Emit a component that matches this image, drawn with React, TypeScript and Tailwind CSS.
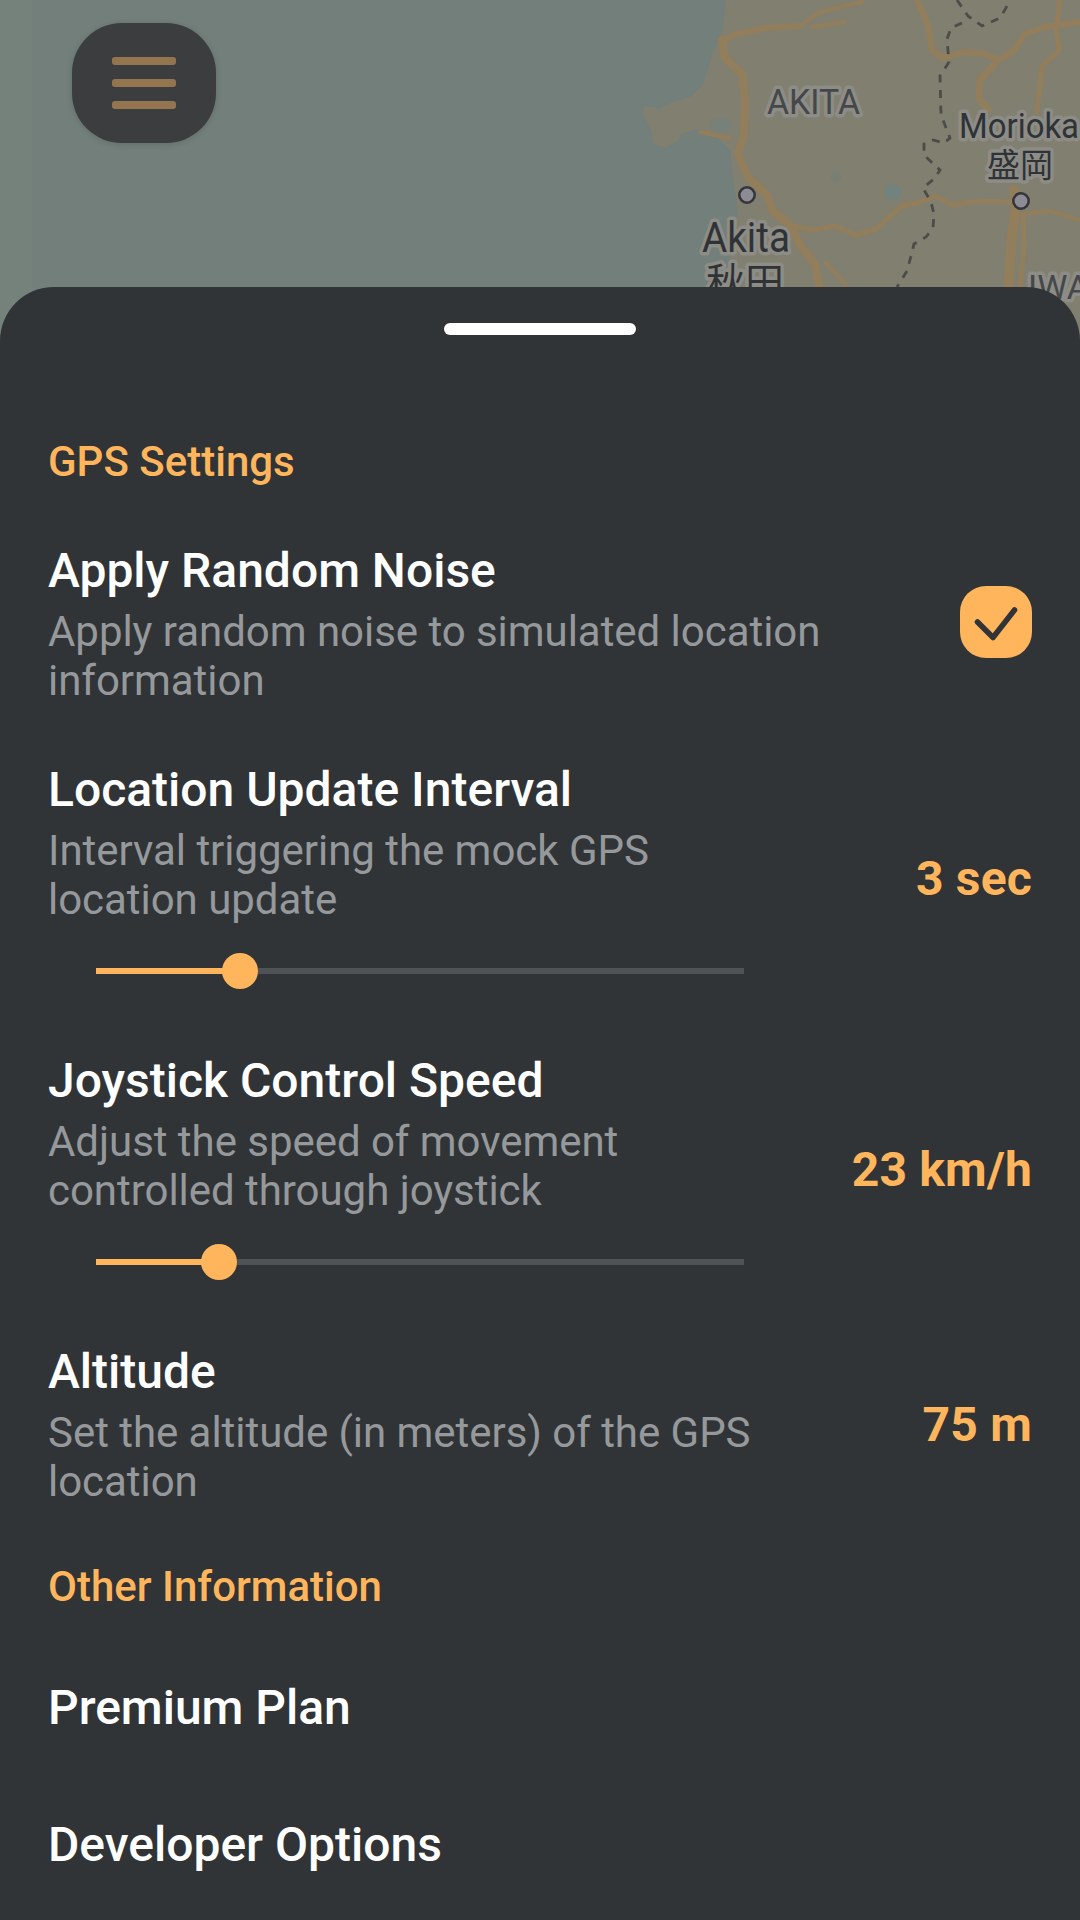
import React from 'react';

interface SettingProps {
    title: string;
    lines: string[];
    className: string;
    aside?: React.ReactNode;
    children?: React.ReactNode;
}

const MapLabel: React.FC<{ x: number; y: number; size: number; color: string; length?: number; children: string }> = ({ x, y, size, color, length, children }) => (
    <text
        x={x}
        y={y}
        fontSize={size}
        fill={color}
        stroke="#8d8c86"
        strokeWidth={7}
        strokeLinejoin="round"
        paintOrder="stroke"
        textLength={length}
        lengthAdjust="spacingAndGlyphs"
    >
        {children}
    </text>
);

const MapBackdrop: React.FC = () => (
    <svg className="absolute inset-0 h-[360px] w-[1080px]" viewBox="0 0 1080 360">
        <rect width="1080" height="360" fill="#727f7a" />
        <rect width="32" height="360" fill="#75827c" />
        {/* Land */}
        <path
            d="M726 0 L722 30 L712 55 L703 84 L692 96 L670 103 L660 108 L644 106 L643 115 L650 127 L654 144 L665 148 L677 142 L681 134 L698 129 L715 136 L730 150 L732 172 L738 210 L732 250 L724 287 L720 360 H1080 V0 Z"
            fill="#817f6f"
        />
        <g fill="#77817a">
            <ellipse cx="721" cy="125" rx="11" ry="7" />
            <circle cx="893" cy="192" r="8" fill="#70837f" />
            <circle cx="836" cy="177" r="5" fill="#7b7e73" />
        </g>
        {/* Roads */}
        <g fill="none" stroke="#937e5c" strokeLinecap="round" strokeLinejoin="round">
            <path strokeWidth="8" d="M722 40 L725 58 L742 74 L745 100 L744 135 L738 154 L748 177 L767 195 L773 211 L790 225 L800 245 L815 264 L820 290" />
            <path strokeWidth="6" d="M800 26 L765 28 L733 35 L722 42" />
            <path strokeWidth="4" d="M800 26 L818 13 L840 7 L862 2 M812 27 L845 22" />
            <path strokeWidth="6" d="M917 0 L928 25 L932 50 L942 58 L964 52 L984 54 L1000 60 L1014 50 L1025 34 L1045 27 L1080 22" />
            <path strokeWidth="7" d="M994 65 L980 80 L979 98 L988 110" />
            <path strokeWidth="5" d="M1060 0 L1056 32 L1060 50 L1042 66 L1037 112" />
            <path strokeWidth="5" d="M790 225 L812 230 L835 226 L856 235 L876 229 L888 218 L902 206 L917 203 L936 196 L952 205 L980 201 L1010 202" />
            <path strokeWidth="10" d="M1014 190 L1016 205 L1012 235 L1008 290" />
            <path strokeWidth="5" d="M1023 215 L1024 245 L1020 290" />
            <path strokeWidth="4" d="M1022 214 L1050 211 L1080 220 M826 263 L846 285 M700 132 L728 138" />
        </g>
        {/* Prefecture border */}
        <path
            d="M957 0 L968 16 L982 26 L1000 18 L1006 8 L1009 0 M962 23 L951 28 L947 39 L949 62 L940 76 L941 115 L950 138 L944 143 L933 140 L924 144 L924 155 L940 170 L935 178 L923 188 L931 202 L934 214 L933 228 L926 237 L914 244 L911 256 L907 271 L897 287"
            fill="none"
            stroke="#4c4c49"
            strokeWidth="2.8"
            strokeDasharray="8 7.5"
        />
        <g fontFamily="Roboto, 'Noto Sans CJK JP', sans-serif">
            <MapLabel x={767} y={114} size={35} color="#45484a" length={93}>AKITA</MapLabel>
            <MapLabel x={959} y={138} size={35} color="#303336" length={120}>Morioka</MapLabel>
            <MapLabel x={987} y={177} size={33} color="#303336">盛岡</MapLabel>
            <MapLabel x={702} y={252} size={42} color="#303336" length={88}>Akita</MapLabel>
            <MapLabel x={706} y={296} size={39} color="#303336">秋田</MapLabel>
            <MapLabel x={1028} y={299} size={34} color="#45484a">IWATE</MapLabel>
        </g>
        <g fill="#8d8c94" stroke="#35363b" strokeWidth="2.6">
            <circle cx="747" cy="195" r="7.7" />
            <circle cx="1021" cy="201" r="7.7" />
        </g>
    </svg>
);

const Slider: React.FC<{ value: number }> = ({ value }) => (
    <div className="relative ml-12 mt-[29px] h-9 w-[648px]">
        <div className="absolute top-[15px] h-1.5 w-full bg-[#505356]" />
        <div className="absolute top-[15px] h-1.5 bg-[#ffb55c]" style={{ width: value }} />
        <div className="absolute top-0 -ml-[18px] size-9 rounded-full bg-[#ffb55c]" style={{ left: value }} />
    </div>
);

const Setting: React.FC<SettingProps> = ({ title, lines, className, aside, children }) => (
    <div className={`flex items-center justify-between ${className}`}>
        <div>
            <h3 className="text-[48px] font-medium leading-[56px] text-white">{title}</h3>
            <p className="mt-2 text-[42px] leading-[49px] tracking-[-0.04px] text-[#96999b]">
                {lines.map((line) => (
                    <span key={line} className="block whitespace-nowrap">{line}</span>
                ))}
            </p>
            {children}
        </div>
        {aside}
    </div>
);

const Value: React.FC<{ className?: string; children: string }> = ({ className = '', children }) => (
    <span className={`whitespace-nowrap text-[48px] font-bold leading-[56px] tracking-[0.2px] text-[#ffb55c] ${className}`}>{children}</span>
);

const App: React.FC = () => {
    return (
        <div className="relative h-[1920px] w-[1080px] overflow-hidden bg-[#727f7a] pt-[23px] font-[Roboto,sans-serif]">
            <MapBackdrop />
            <button className="relative ml-[72px] flex h-[120px] w-36 flex-col items-center gap-3.5 rounded-[50px] bg-[#3b3d3e] pt-[34px] shadow-[0_1px_6px_rgba(0,0,0,0.15)]">
                <span className="h-2 w-16 rounded-[3px] bg-[#94754f]" />
                <span className="h-2 w-16 rounded-[3px] bg-[#94754f]" />
                <span className="h-2 w-16 rounded-[3px] bg-[#94754f]" />
            </button>

            <div className="relative mt-36 flex h-[1633px] flex-col rounded-t-[54px] bg-[#313437] px-12 pt-9">
                <div className="h-3 w-48 self-center rounded-full bg-white" />

                <h2 className="mt-[102px] text-[42px] font-medium leading-[49px] text-[#ffb55c]">GPS Settings</h2>

                <Setting
                    className="mt-[57px]"
                    title="Apply Random Noise"
                    lines={['Apply random noise to simulated location', 'information']}
                    aside={
                        <div className="mb-[5px] flex size-[72px] items-center justify-center rounded-[26px] bg-[#ffb55c]">
                            <svg className="size-[72px]" viewBox="0 0 72 72" fill="none" stroke="#313437" strokeWidth="5.5" strokeLinecap="round" strokeLinejoin="round">
                                <path d="M17.5 36 L33 51.5 L54.5 24" />
                            </svg>
                        </div>
                    }
                />

                <Setting
                    className="mt-[57px]"
                    title="Location Update Interval"
                    lines={['Interval triggering the mock GPS', 'location update']}
                    aside={<Value className="pt-[7px]">3 sec</Value>}
                >
                    <Slider value={144} />
                </Setting>

                <Setting
                    className="mt-16"
                    title="Joystick Control Speed"
                    lines={['Adjust the speed of movement', 'controlled through joystick']}
                    aside={<Value className="pt-[7px]">23 km/h</Value>}
                >
                    <Slider value={123} />
                </Setting>

                <Setting
                    className="mt-16"
                    title="Altitude"
                    lines={['Set the altitude (in meters) of the GPS', 'location']}
                    aside={<Value>75 m</Value>}
                />

                <h2 className="mt-[56px] text-[42px] font-medium leading-[49px] text-[#ffb55c]">Other Information</h2>
                <h3 className="mt-[69px] text-[48px] font-medium leading-[56px] text-white">Premium Plan</h3>
                <h3 className="mt-[81px] text-[48px] font-medium leading-[56px] text-white">Developer Options</h3>
            </div>
        </div>
    );
};

export default App;
